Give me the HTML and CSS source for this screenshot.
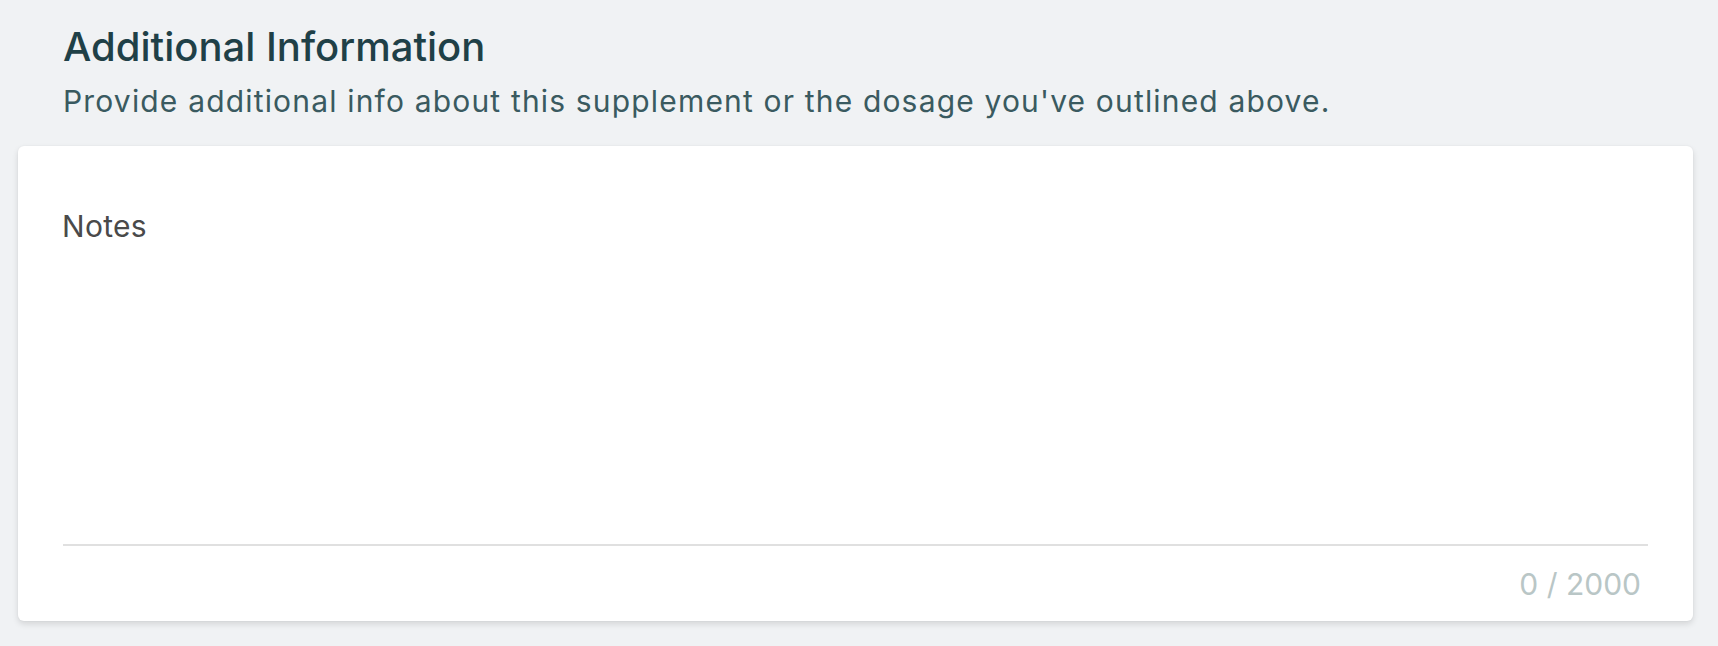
FILE: index.html
```html
<!DOCTYPE html>
<html lang="en">
<head>
<meta charset="utf-8">
<title>Additional Information</title>
<link rel="stylesheet" href="styles.css">
</head>
<body>
<div class="page">
  <header class="header">
    <h1 class="title">Additional Information</h1>
    <p class="subtitle">Provide additional info about this supplement or the dosage you've outlined above.</p>
  </header>
  <section class="card">
    <label class="label" for="notes">Notes</label>
    <textarea id="notes" class="notes" maxlength="2000"></textarea>
    <div class="counter">0 / 2000</div>
  </section>
</div>
</body>
</html>
```

FILE: styles.css
```css
* { box-sizing: border-box; }
html, body { margin: 0; padding: 0; }
body {
  background: #f0f2f4;
  font-family: Inter, "Noto Sans", sans-serif;
  width: 1718px;
  height: 646px;
  overflow: hidden;
}
.page {
  display: flex;
  flex-direction: column;
  padding: 23px 25px 0 18px;
}
.header {
  padding-left: 45px;
}
.title {
  margin: 0;
  font-size: 40px;
  line-height: 48px;
  font-weight: 500;
  color: #1f4047;
}
.subtitle {
  margin: 8px 0 0;
  font-size: 30px;
  line-height: 45px;
  font-weight: 400;
  letter-spacing: 1.17px;
  color: #3a5a60;
}
.card {
  margin-top: 22px;
  background: #ffffff;
  border-radius: 6px;
  box-shadow: 0 3px 6px rgba(0, 0, 0, 0.12), 0 0 2px rgba(0, 0, 0, 0.05);
  padding: 62px 45px 19px 45px;
  display: flex;
  flex-direction: column;
}
.label {
  margin-left: -1px;
  font-size: 30px;
  line-height: 36px;
  font-weight: 400;
  letter-spacing: 0.3px;
  color: #4a4a4a;
}
.notes {
  height: 302px;
  border: none;
  border-bottom: 2px solid #e0e0e0;
  resize: none;
  outline: none;
  font-family: inherit;
  font-size: 30px;
  padding: 0;
  background: transparent;
}
.counter {
  margin-top: 20px;
  text-align: right;
  padding-right: 7px;
  font-size: 30px;
  line-height: 36px;
  color: #b9c6c6;
}
```
